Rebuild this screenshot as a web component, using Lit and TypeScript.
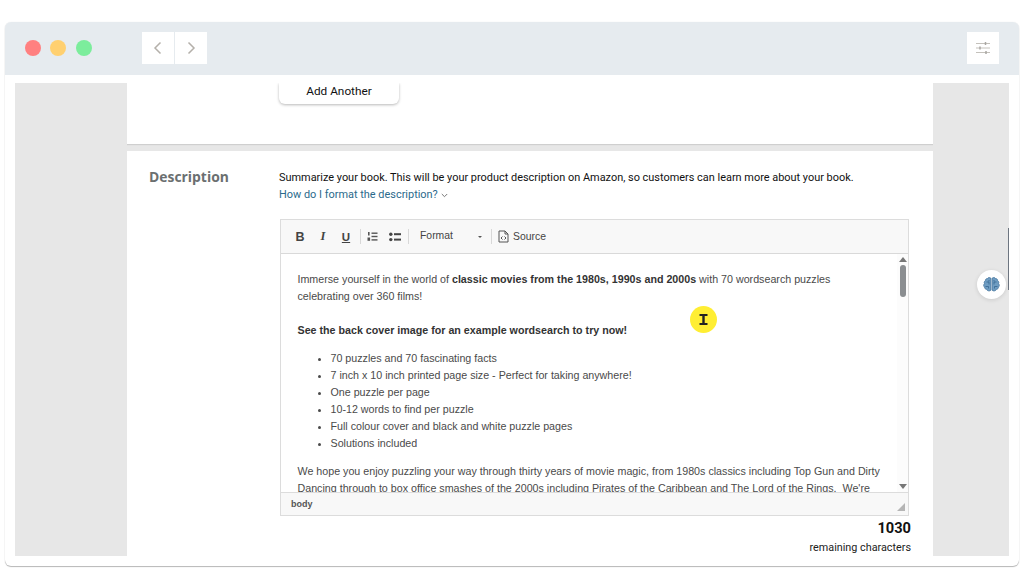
import { LitElement, html, css, svg } from "lit";
import { customElement } from "lit/decorators.js";

@customElement("app-root")
export class AppRoot extends LitElement {
  static styles = css`
    :host { display: block; width: 1024px; height: 587px; background: #fff; position: relative; overflow: hidden; font-family: Roboto, sans-serif; }
    .window { position: absolute; left: 5px; top: 22px; width: 1014px; height: 544px; box-sizing: border-box; border-radius: 6px; overflow: hidden; background: #fff; box-shadow: 0 1px 1px rgba(0,0,0,.28), 0 0 1px rgba(0,0,0,.12); display: flex; flex-direction: column; }
    .titlebar { height: 52.5px; flex: none; background: #e6ebef; display: flex; align-items: center; padding: 0 20px; }
    .dots { display: flex; gap: 9.4px; width: 117px; }
    .dot { width: 16px; height: 16px; border-radius: 50%; }
    .r { background: #ff8080; } .y { background: #ffd070; } .g { background: #7ced9c; }
    .nav { display: flex; gap: 1px; }
    .btn { width: 32px; height: 32px; background: #fff; display: flex; align-items: center; justify-content: center; }
    .spacer { flex: 1; }
    .page { flex: 1; min-height: 0; margin: 8.5px 10px 10px; display: grid; grid-template-columns: 112px 806px 76px; background: #e7e7e7; }
    .center { display: flex; flex-direction: column; gap: 7px; min-height: 0; overflow: hidden; }
    .card { background: #fff; }
    .top { height: 61px; flex: none; box-shadow: 0 1px 1px rgba(0,0,0,.1); position: relative; }
    .add { margin-left: 152px; width: 120px; height: 21px; box-sizing: border-box; background: #fff; border-radius: 0 0 6px 6px; box-shadow: 0 1px 3px rgba(0,0,0,.28); font-size: 11.8px; color: #111; display: flex; align-items: center; justify-content: center; padding-bottom: 5px; }
    .main { flex: 1; min-height: 0; display: flex; padding: 17px 22px 0 22px; }
    h2 { margin: 0; width: 130px; flex: none; font-family: "Open Sans", sans-serif; font-size: 13.9px; line-height: 18px; font-weight: 700; color: #6b6f70; }
    .body { flex: 1; min-width: 0; display: flex; flex-direction: column; }
    .intro { font-size: 10.93px; line-height: 16px; color: #111; margin-top: 2px; height: 16px; white-space: nowrap; }
    .link { font-size: 10.93px; line-height: 16px; color: #2b6a8c; display: flex; align-items: center; gap: 3px; margin-top: 1px; }
    .editor { margin: 16px 2px 0 1px; height: 297px; flex: none; border: 1px solid #dcdcdc; box-sizing: border-box; display: flex; flex-direction: column; font-family: "Liberation Sans", sans-serif; color: #444; }
    .toolbar { height: 34px; flex: none; box-sizing: border-box; background: #f8f8f8; border-bottom: 1px solid #d9d9d9; display: flex; align-items: center; padding-left: 14px; color: #444; font-size: 10.5px; }
    .tb { display: flex; align-items: center; justify-content: center; }
    .sep { width: 1px; height: 15px; background: #d8d8d8; }
    .content { flex: 1; min-height: 0; display: flex; overflow: hidden; }
    .text { flex: 1; min-width: 0; overflow: hidden; padding: 17px 0 0 16.5px; font-size: 10.7px; line-height: 17.2px; color: #4a4a4a; }
    .text p { margin: 0; width: 570px; }
    .text ul { margin: 0; padding: 0 0 0 33px; list-style: disc; }
    .text li { height: 17px; line-height: 17px; }
    .text b { color: #333; }
    .bar { width: 11px; flex: none; background: #fcfcfc; display: flex; flex-direction: column; align-items: center; padding-top: 3px; box-sizing: border-box; }
    .up { width: 0; height: 0; border: 4px solid transparent; border-top: 0; border-bottom: 5px solid #777; }
    .thumb { width: 6px; height: 32px; border-radius: 3px; background: #8b8e91; margin-top: 3px; }
    .down { width: 0; height: 0; border: 4px solid transparent; border-bottom: 0; border-top: 5px solid #777; margin-top: auto; margin-bottom: 3px; }
    .foot { height: 23px; flex: none; background: #f8f8f8; border-top: 1px solid #dcdcdc; display: flex; align-items: center; justify-content: space-between; padding: 0 3px 0 10px; font-size: 9px; font-weight: 700; color: #555; box-sizing: border-box; }
    .grip { width: 0; height: 0; border-left: 8px solid transparent; border-bottom: 8px solid #b5b5b5; margin-top: 5px; }
    .count { text-align: right; margin-top: 2px; }
    .num { font-size: 14.6px; line-height: 20px; font-weight: 700; color: #111; }
    .rem { font-size: 10.8px; line-height: 20px; color: #222; }
    .cursor { position: absolute; left: 690px; top: 306px; width: 27px; height: 27px; border-radius: 50%; background: #ffee33; display: flex; align-items: center; justify-content: center; }
    .brain { position: absolute; left: 977px; top: 270px; width: 29px; height: 29px; border-radius: 50%; background: #fff; box-shadow: 0 1px 4px rgba(0,0,0,.12); display: flex; align-items: center; justify-content: center; }
    .line { position: absolute; left: 1008px; top: 228px; width: 1px; height: 62px; background: #6d7580; }
    .t-b { width: 10px; font: 700 12.5px "Liberation Sans", sans-serif; }
    .t-i { width: 10px; margin-left: 13px; font: italic 700 12.5px "Liberation Serif", serif; }
    .t-u { width: 12px; margin-left: 12px; font: 700 11.5px "Liberation Sans", sans-serif; text-decoration: underline; }
    .s1 { margin-left: 8px; }
    .ol { margin-left: 6px; }
    .ul { margin-left: 11px; }
    .s2 { margin-left: 7px; }
    .fmt { margin-left: 11px; width: 48px; font-size: 10.4px; padding-bottom: 2px; }
    .caret { width: 0; height: 0; border: 2.2px solid transparent; border-top: 2.6px solid #555; border-bottom: 0; margin-left: 10px; }
    .s3 { margin-left: 9px; }
    .src-i { margin-left: 6px; }
    .src { margin-left: 4px; font-size: 10.4px; }
    .text .p2 { margin-top: 17px; }
    .text .ul-list { margin-top: 10px; }
    .text .p3 { margin-top: 11px; width: 590px; }
  `;

  private bullets = ["70 puzzles and 70 fascinating facts", "7 inch x 10 inch printed page size - Perfect for taking anywhere!", "One puzzle per page", "10-12 words to find per puzzle", "Full colour cover and black and white puzzle pages", "Solutions included"];

  private chev(d: string) {
    return html`<svg width="12" height="14" viewBox="0 0 12 14" fill="none" stroke="#b4b0aa" stroke-width="1.5"><path d="${d}"/></svg>`;
  }

  render() {
    return html`
      <div class="window">
        <div class="titlebar">
          <div class="dots"><div class="dot r"></div><div class="dot y"></div><div class="dot g"></div></div>
          <div class="nav">
            <div class="btn">${this.chev("M8.5 1.5 L3 7 L8.5 12.5")}</div>
            <div class="btn">${this.chev("M3.5 1.5 L9 7 L3.5 12.5")}</div>
          </div>
          <div class="spacer"></div>
          <div class="btn">
            <svg width="16" height="14" viewBox="0 0 16 14" fill="none" stroke="#c4c1bb" stroke-width="1">
              <path d="M1 2.5H15M1 7H15M1 11.5H15"/>
              <path d="M10.5 1V4M5 5.5V8.5M11 10V13" stroke="#a8a6a2" stroke-width="1.5"/>
            </svg>
          </div>
        </div>
        <div class="page">
          <div></div>
          <div class="center">
            <div class="card top"><div class="add">Add Another</div></div>
            <div class="card main">
              <h2>Description</h2>
              <div class="body">
                <div class="intro">Summarize your book. This will be your product description on Amazon, so customers can learn more about your book.</div>
                <div class="link">How do I format the description?
                  <svg width="7" height="5" viewBox="0 0 7 5" fill="none" stroke="#777" stroke-width="1"><path d="M.8 1 L3.5 3.7 L6.2 1"/></svg>
                </div>
                <div class="editor">
                  <div class="toolbar">
                    <span class="tb t-b">B</span>
                    <span class="tb t-i">I</span>
                    <span class="tb t-u">U</span>
                    <span class="sep s1"></span>
                    <span class="tb ol">
                      <svg width="11" height="11" viewBox="0 0 11 11" fill="#555"><rect x="4.5" y="1.5" width="6" height="1.4"/><rect x="4.5" y="4.8" width="6" height="1.4"/><rect x="4.5" y="8.2" width="6" height="1.4"/><rect x="1" y="1" width="1.6" height="3.5"/><rect x=".5" y="6.5" width="2.6" height="3.3"/></svg>
                    </span>
                    <span class="tb ul">
                      <svg width="12" height="10" viewBox="0 0 12 10" fill="#444"><circle cx="1.8" cy="2.2" r="1.7"/><circle cx="1.8" cy="7.6" r="1.7"/><rect x="5" y="1.2" width="7" height="2"/><rect x="5" y="6.6" width="7" height="2"/></svg>
                    </span>
                    <span class="sep s2"></span>
                    <span class="fmt">Format</span>
                    <span class="caret"></span>
                    <span class="sep s3"></span>
                    <span class="tb src-i">
                      <svg width="11" height="13" viewBox="0 0 11 13" fill="none" stroke="#555" stroke-width="1"><path d="M1 1H7L10 4V12H1Z"/><path d="M7 1V4H10"/><path d="M4.5 6.5L3 8L4.5 9.5M6.5 6.5L8 8L6.5 9.5"/></svg>
                    </span>
                    <span class="src">Source</span>
                  </div>
                  <div class="content">
                    <div class="text">
                      <p>Immerse yourself in the world of <b>classic movies from the 1980s, 1990s and 2000s</b> with 70 wordsearch puzzles celebrating over 360 films!</p>
                      <p class="p2"><b>See the back cover image for an example wordsearch to try now!</b></p>
                      <ul class="ul-list">${this.bullets.map((b) => html`<li>${b}</li>`)}</ul>
                      <p class="p3">We hope you enjoy puzzling your way through thirty years of movie magic, from 1980s classics including Top Gun and Dirty Dancing through to box office smashes of the 2000s including Pirates of the Caribbean and The Lord of the Rings.&nbsp; We're</p>
                    </div>
                    <div class="bar"><div class="up"></div><div class="thumb"></div><div class="down"></div></div>
                  </div>
                  <div class="foot"><span>body</span><span class="grip"></span></div>
                </div>
                <div class="count">
                  <div class="num">1030</div>
                  <div class="rem">remaining characters</div>
                </div>
              </div>
            </div>
          </div>
          <div></div>
        </div>
      </div>
      <div class="line"></div>
      <div class="cursor">
        <svg width="9" height="11" viewBox="0 0 9 11" fill="#222"><path d="M.5 0H8.5V2H5.7V9H8.5V11H.5V9H3.3V2H.5Z"/></svg>
      </div>
      <div class="brain">
        <svg width="17" height="15" viewBox="0 0 17 15" fill="#6f9dc2" stroke="#3a6c96" stroke-width=".7">
          <path d="M7.9 1.2C6.6 .2 5 .5 4.3 1.6 3 1.6 2.2 2.6 2.4 3.7 1.2 4.3.8 5.7 1.5 6.7.3 7.6.4 9.3 1.6 10 1.4 11.3 2.4 12.4 3.6 12.3 4 13.8 6.4 14.6 7.9 13.2Z"/>
          <path d="M9.1 1.2C10.4 .2 12 .5 12.7 1.6 14 1.6 14.8 2.6 14.6 3.7 15.8 4.3 16.2 5.7 15.5 6.7 16.7 7.6 16.6 9.3 15.4 10 15.6 11.3 14.6 12.4 13.4 12.3 13 13.8 10.6 14.6 9.1 13.2Z"/>
          ${svg`<path d="M3.5 5H6V7.5M2.5 9.5H5.5V11.5M6 3V4.5M13.5 5H11V7.5M14.5 9.5H11.5V11.5M11 3V4.5" fill="none" stroke="#2f5f8a" stroke-width=".7"/>`}
        </svg>
      </div>
    `;
  }
}
